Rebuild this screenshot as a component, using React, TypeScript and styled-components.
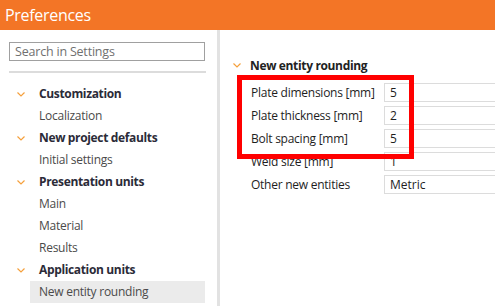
import { FC } from 'react'
import styled, { createGlobalStyle } from 'styled-components'

const GlobalStyle = createGlobalStyle`
	html, body {
		margin: 0;
		padding: 0;
		background: #ffffff;
		font-family: 'Open Sans', 'Noto Sans', sans-serif;
		overflow: hidden;
	}
`

interface TTreeItem {
	label: string
	group?: boolean
	selected?: boolean
}

const treeItems: TTreeItem[] = [
	{ label: 'Customization', group: true },
	{ label: 'Localization' },
	{ label: 'New project defaults', group: true },
	{ label: 'Initial settings' },
	{ label: 'Presentation units', group: true },
	{ label: 'Main' },
	{ label: 'Material' },
	{ label: 'Results' },
	{ label: 'Application units', group: true },
	{ label: 'New entity rounding', selected: true },
]

const fields = [
	{ label: 'Plate dimensions [mm]', value: '5' },
	{ label: 'Plate thickness [mm]', value: '2' },
	{ label: 'Bolt spacing [mm]', value: '5' },
	{ label: 'Weld size [mm]', value: '1' },
	{ label: 'Other new entities', value: 'Metric' },
]

const Chevron: FC = () => (
	<svg width="8" height="5" viewBox="0 0 8 5">
		<path d="M0.5 0.5 L4 4 L7.5 0.5" fill="none" stroke="#f5a03c" strokeWidth="1.2" />
	</svg>
)

const App: FC = () => {
	return (
		<>
			<GlobalStyle />
			<Window>
				<Header>Preferences</Header>
				<Body>
					<Sidebar>
						<Search placeholder="Search in Settings" />
						<Rule />
						<Tree>
							{treeItems.map((item) => (
								<TreeRow key={item.label}>
									<ChevronSlot>{item.group && <Chevron />}</ChevronSlot>
									<TreeLabel $group={item.group} $selected={item.selected}>
										{item.label}
									</TreeLabel>
								</TreeRow>
							))}
						</Tree>
					</Sidebar>
					<Divider />
					<Content>
						<SectionTitle>
							<ChevronSlotSmall>
								<Chevron />
							</ChevronSlotSmall>
							New entity rounding
						</SectionTitle>
						<Fields>
							<Highlight />
							{fields.map((f) => (
								<FieldRow key={f.label}>
									<FieldLabel>{f.label}</FieldLabel>
									<FieldValue>{f.value}</FieldValue>
								</FieldRow>
							))}
						</Fields>
					</Content>
				</Body>
			</Window>
		</>
	)
}

const Window = styled.div`
	width: 495px;
	height: 306px;
	display: flex;
	flex-direction: column;
	overflow: hidden;
`

const Header = styled.div`
	height: 30px;
	flex-shrink: 0;
	background: #f37526;
	color: #ffffff;
	font-size: 16px;
	line-height: 30px;
	padding-left: 5px;
	letter-spacing: -0.3px;
`

const Body = styled.div`
	flex: 1;
	display: flex;
	min-height: 0;
`

const Sidebar = styled.div`
	width: 196px;
	padding: 12px 12px 0 9px;
	display: flex;
	flex-direction: column;
	flex-shrink: 0;
`

const Search = styled.input`
	box-sizing: border-box;
	height: 19px;
	width: 196px;
	border: 1px solid #a0a0a0;
	padding: 0 5px;
	font-family: inherit;
	font-size: 12.5px;
	letter-spacing: -0.2px;
	outline: none;

	&::placeholder {
		color: #707070;
	}
`

const Rule = styled.div`
	height: 2px;
	background: #dcdcdc;
	margin-top: 10px;
	margin-bottom: 10px;
	width: 197px;
`

const Tree = styled.div`
	display: flex;
	flex-direction: column;
`

const TreeRow = styled.div`
	display: flex;
	align-items: center;
	height: 22px;
`

const ChevronSlot = styled.div`
	width: 21px;
	display: flex;
	justify-content: center;
	align-items: center;
	padding-left: 2px;
	box-sizing: border-box;
`

const TreeLabel = styled.div<{ $group?: boolean; $selected?: boolean }>`
	flex: 1;
	height: 22px;
	line-height: 21px;
	padding-left: 9px;
	font-size: 12px;
	font-weight: ${(p) => (p.$group ? 700 : 400)};
	color: ${(p) => (p.$group ? '#2b2b38' : '#4a4a4a')};
	background: ${(p) => (p.$selected ? '#ebebeb' : 'transparent')};
	letter-spacing: ${(p) => (p.$group ? '-0.35px' : '-0.25px')};
`

const Divider = styled.div`
	width: 3px;
	background: #e2e2e2;
	flex-shrink: 0;
`

const Content = styled.div`
	flex: 1;
	padding: 27px 0 0 13px;
	display: flex;
	flex-direction: column;
	min-width: 0;
`

const SectionTitle = styled.div`
	display: flex;
	align-items: center;
	height: 16px;
	font-size: 12px;
	font-weight: 700;
	color: #222222;
	letter-spacing: -0.35px;
`

const ChevronSlotSmall = styled.div`
	width: 17px;
	display: flex;
	align-items: center;
`

const Fields = styled.div`
	position: relative;
	margin-top: 10px;
	margin-left: 18px;
	display: flex;
	flex-direction: column;
	gap: 4px;
`

const Highlight = styled.div`
	position: absolute;
	left: -14px;
	top: -8px;
	width: 167px;
	height: 74px;
	border: 5px solid #ff0000;
	pointer-events: none;
	z-index: 2;
`

const FieldRow = styled.div`
	display: flex;
	align-items: center;
	height: 19px;
`

const FieldLabel = styled.div`
	width: 133px;
	flex-shrink: 0;
	font-size: 12px;
	color: #1e1e1e;
	letter-spacing: -0.25px;
`

const FieldValue = styled.div`
	box-sizing: border-box;
	height: 19px;
	width: 140px;
	flex-shrink: 0;
	border: 1px solid #dcdcdc;
	padding-left: 5px;
	font-size: 12px;
	line-height: 17px;
	color: #1e1e1e;
`

export default App
